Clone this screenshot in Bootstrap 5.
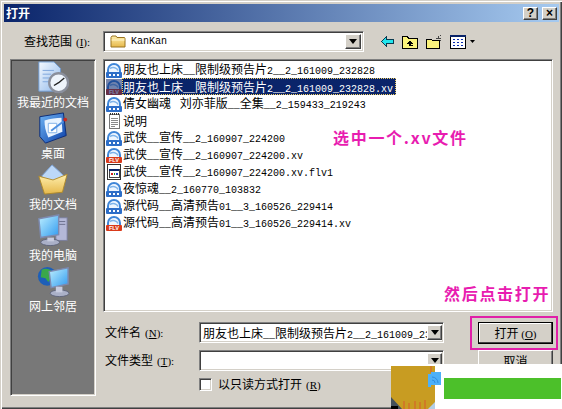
<!DOCTYPE html>
<html>
<head>
  <meta charset="utf-8">
  <title>打开</title>
  <link href="https://cdn.jsdelivr.net/npm/bootstrap@5.3.0/dist/css/bootstrap.min.css" rel="stylesheet">
  <style>
    body { margin: 0; background: #d4d0c8; color: #000; font: 12px/14px "Noto Sans CJK SC", "Liberation Sans", sans-serif; }
    .svg-defs { display: block; width: 0; height: 0; overflow: hidden; }
    .dlg { position: relative; width: 562px; height: 409px; overflow: hidden; background: #d4d0c8; padding: 4px 3px 0 4px;
      box-shadow: inset 1px 1px #d4d0c8, inset 2px 2px #fff, inset -1px -1px #404040, inset -2px -2px #808080; }
    .lat { font: 10px/14px "Liberation Mono", monospace; }
    .key { font: 11px/14px "Liberation Serif", serif; margin-left: 4px; }
    .key u { text-underline-offset: 1px; }

    .dlg-title { height: 18px; padding: 0 2px; background: linear-gradient(90deg, #0a246a, #a6caf0); color: #fff; font-weight: 700; font-size: 12px; }
    .cap-btn { width: 15px; height: 13px; padding: 0; background: #d4d0c8; color: #000; font: 700 12px/11px "Liberation Sans", sans-serif; text-align: center; }
    .raised { border: 1px solid; border-color: #fff #404040 #404040 #fff; box-shadow: inset -1px -1px #808080, inset 1px 1px #d4d0c8; }
    .sunken { border: 1px solid; border-color: #808080 #fff #fff #808080; box-shadow: inset 1px 1px #404040, inset -1px -1px #d4d0c8; }

    .look-row { height: 21px; margin-top: 9px; }
    .look-label { width: 99px; padding-left: 20px; flex: none; }
    .combo { background: #fff; padding: 2px; flex: none; }
    .combo-look { width: 261px; height: 21px; }
    .combo-text { padding-left: 5px; }
    .combo-arrow { width: 16px; margin-left: auto; background: #d4d0c8; }
    .combo-arrow::after { content: ""; border: 4px solid transparent; border-top: 5px solid #000; border-bottom: 0; }
    .tools { margin-left: 17px; gap: 8px; }

    .dlg-main { margin-top: 7px; padding-left: 6px; gap: 7px; }
    .places { width: 86px; height: 337px; background: #787878; padding-top: 1px; flex: none; color: #fff; }
    .place { height: 51px; }
    .place svg { display: block; height: 33px; }
    .place-name { line-height: 15px; margin-top: 0; white-space: nowrap; }

    .right-col { width: 450px; flex: none; }
    .files { height: 253px; background: #fff; padding: 1px 2px 0; border-radius: 0; }
    .files .list-group-item { height: 17px; padding: 0; border: 0; border-radius: 0; background: transparent; color: #000; font-size: 12px; line-height: 17px; white-space: nowrap; }
    .files .list-group-item svg { flex: none; margin-right: 1px; }
    .sel-name { margin-left: -1px; padding: 0 3px 0 1px; height: 17px; outline: 1px dotted #f0d060; outline-offset: -1px; background: #0a246a; color: #fff; }

    .form-area { margin-top: 10px; }
    .field-label { width: 96px; padding-left: 2px; flex: none; }
    .name-box { width: 245px; height: 21px; padding: 2px 1px 2px 2px; }
    .name-box .combo-text { padding-left: 1px; overflow: hidden; white-space: nowrap; width: 226px; line-height: 15px; }
    .name-box .combo-arrow { width: 15px; }
    .type-box { height: 20px; margin-top: 7px; }
    .ro-row { margin-top: 7px; margin-left: 96px; gap: 6px; height: 14px; }
    .ro-check { width: 13px; height: 13px; background: #fff; flex: none; }
    .action-col { width: 75px; margin-left: 34px; flex: none; }
    .win-btn { width: 75px; height: 22px; padding: 0; border-radius: 0; background: #d4d0c8; color: #000; font-size: 12px; line-height: 14px; }
    .win-btn.btn:hover { background: #d4d0c8; color: #000; }
    .win-default { outline: 1px solid #000; outline-offset: -1px; box-shadow: inset -2px -2px #404040, inset 2px 2px #fff; border: 0; }
    .win-cancel { margin-top: 6px; }

    .note { position: absolute; color: #e81cb0; font-family: "Noto Sans CJK SC", sans-serif; font-weight: 700; font-size: 16px; line-height: 18px; white-space: nowrap; }
    .note-pick { left: 333px; top: 128px; letter-spacing: 1.7px; }
    .note-click { left: 444px; top: 284px; letter-spacing: 1.7px; }
    .open-mark { position: absolute; left: 470px; top: 316px; width: 88px; height: 34px; border: 2px solid #e01fa8; }
    .corner-ad { position: absolute; left: 391px; top: 364px; width: 171px; height: 45px; background: #fff; }
    .corner-ad svg { display: block; }
  </style>
</head>
<body>
<svg class="svg-defs" xmlns="http://www.w3.org/2000/svg">
  <defs>
    <linearGradient id="gScreen" x1="0" y1="0" x2="1" y2="1"><stop offset="0" stop-color="#bff0ff"/><stop offset="1" stop-color="#2f9af0"/></linearGradient>
    <linearGradient id="gPage" x1="0" y1="0" x2="1" y2="1"><stop offset="0" stop-color="#f4f9ff"/><stop offset="1" stop-color="#8fb8ea"/></linearGradient>
    <linearGradient id="gFolder" x1="0" y1="0" x2="0" y2="1"><stop offset="0" stop-color="#fff0b0"/><stop offset="1" stop-color="#e6b84a"/></linearGradient>
    <linearGradient id="gTile" x1="0" y1="0" x2="1" y2="1"><stop offset="0" stop-color="#6fb4f4"/><stop offset="1" stop-color="#0b3fa8"/></linearGradient>
    <symbol id="ic-video" viewBox="0 0 16 16">
      <path d="M1 10V8a7 7 0 0 1 14 0v2z" fill="#3f86d8"/>
      <path d="M3 10V8a5 5 0 0 1 10 0v2z" fill="#eef6ff"/>
      <path d="M4 6.5a5 4 0 0 1 8 2" fill="none" stroke="#7fb4ea" stroke-width="1.5"/>
      <rect x="0" y="10" width="16" height="6" rx="1" fill="#2d6ec8"/>
      <rect x="3" y="12" width="2" height="2" fill="#fff"/><rect x="7" y="12" width="2" height="2" fill="#fff"/><rect x="11" y="12" width="2" height="2" fill="#fff"/>
    </symbol>
    <symbol id="ic-flv" viewBox="0 0 16 16">
      <path d="M1 10V8a7 7 0 0 1 14 0v2z" fill="#3f86d8"/>
      <path d="M3 10V8a5 5 0 0 1 10 0v2z" fill="#eef6ff"/>
      <path d="M4 6.5a5 4 0 0 1 8 2" fill="none" stroke="#7fb4ea" stroke-width="1.5"/>
      <rect x="0" y="10" width="16" height="6" rx="1" fill="#d93a1a"/>
      <text x="8" y="15.2" text-anchor="middle" font-family="Liberation Sans" font-weight="700" font-size="5.6" fill="#fff">FLV</text>
    </symbol>
  </defs>
</svg>

<div class="dlg">
  <div class="dlg-title d-flex align-items-center">
    <span>打开</span>
    <span class="ms-auto d-flex gap-1 align-items-center">
      <span class="cap-btn raised">?</span>
      <span class="cap-btn raised">×</span>
    </span>
  </div>

  <div class="look-row d-flex align-items-center">
    <label class="look-label">查找范围<span class="key">(<u>I</u>):</span></label>
    <div class="combo combo-look sunken d-flex align-items-stretch">
      <svg class="ms-1 align-self-center" width="16" height="13" viewBox="0 0 16 13">
        <path d="M1 2.5 2 1h4l1 1.5h7.5l.5 1V12H1z" fill="url(#gFolder)" stroke="#9a7420"/>
        <path d="M1.5 5h13" stroke="#fff6cc"/>
      </svg>
      <span class="combo-text lat align-self-center">KanKan</span>
      <span class="combo-arrow raised d-flex align-items-center justify-content-center"></span>
    </div>
    <div class="tools d-flex align-items-center">
      <svg width="13" height="11" viewBox="0 0 13 11" shape-rendering="crispEdges">
        <path d="M.5 5.5 5.5.5v3h7v4h-7v3z" fill="#22e6ee" stroke="#0b3b50"/>
      </svg>
      <svg width="16" height="14" viewBox="0 0 16 14" shape-rendering="crispEdges">
        <path d="M.5 13.5V1.5h5l1 2h9v10z" fill="#fbf37c" stroke="#000"/>
        <path d="M8 5.5 5 8.500h2v2h4v-1H8.500V8.500H11z" fill="#000"/>
      </svg>
      <svg width="16" height="14" viewBox="0 0 16 14" shape-rendering="crispEdges">
        <path d="M.5 13.500V4.500h5l1 1h7v8z" fill="#fbf37c" stroke="#000"/>
        <path d="M12 4 12 1M10 3 15 3M14 1 15 0M14 5 15 6" stroke="#444"/>
      </svg>
      <span class="d-flex align-items-center gap-1">
        <svg width="16" height="14" viewBox="0 0 16 14" shape-rendering="crispEdges">
          <rect x=".5" y=".5" width="15" height="13" fill="#fff" stroke="#000"/>
          <rect x="0" y="0" width="16" height="2" fill="#0a246a"/>
          <path d="M3 4h2v1H3zM7 4h2v1H7zM11 4h2v1h-2zM3 7h2v1H3zM7 7h2v1H7zM11 7h2v1h-2zM3 10h2v1H3zM7 10h2v1H7zM11 10h2v1h-2z" fill="#0a2cb0"/>
        </svg>
        <svg width="5" height="3" viewBox="0 0 5 3"><path d="M0 0h5L2.500 3z" fill="#000"/></svg>
      </span>
    </div>
  </div>

  <div class="dlg-main d-flex">
    <nav class="places sunken d-flex flex-column">
      <a class="place d-flex flex-column align-items-center text-decoration-none text-white">
        <svg width="32" height="35" viewBox="0 0 32 35">
          <path d="M1 1h16l7 7v24H1z" fill="url(#gPage)" stroke="#6f9ad0"/>
          <path d="M5 10h12M5 14h9M5 18h8M5 22h8" stroke="#7da6dc"/>
          <circle cx="22" cy="23" r="10" fill="#eef4fb" stroke="#8a8f9c" stroke-width="2.500"/>
          <path d="M22 23l6-5M22 23l-5 3" stroke="#222" stroke-width="1.500"/>
        </svg>
        <span class="place-name">我最近的文档</span>
      </a>
      <a class="place d-flex flex-column align-items-center text-decoration-none text-white">
        <svg width="32" height="35" viewBox="0 0 32 35">
          <path d="M2 5 27 1l3 24-22 8-6-7z" fill="url(#gTile)" stroke="#0a2a78"/>
          <path d="M7 9c6-2 13-3 18-3l1 15-15 6C8 20 7 15 7 9z" fill="#e8f3ff"/>
          <path d="M11 12h9v10h-9z" fill="#fff" stroke="#7fb0e8"/>
          <path d="M14 20 27 10" stroke="#4d8fe0" stroke-width="2"/>
          <circle cx="29" cy="8" r="2" fill="#c8281e"/>
        </svg>
        <span class="place-name">桌面</span>
      </a>
      <a class="place d-flex flex-column align-items-center text-decoration-none text-white">
        <svg width="32" height="35" viewBox="0 0 32 35">
          <path d="M15 2 28 14 16 26 4 14z" fill="#bcd8f8" stroke="#7ea6dc"/>
          <path d="M1 14l6 19 19-2 5-19-15 6z" fill="url(#gFolder)" stroke="#b08a2a"/>
        </svg>
        <span class="place-name">我的文档</span>
      </a>
      <a class="place d-flex flex-column align-items-center text-decoration-none text-white">
        <svg width="34" height="35" viewBox="0 0 34 35">
          <rect x="20" y="4" width="12" height="24" fill="#b4b8d8" stroke="#7a7e9c"/>
          <path d="M22 8h8M22 11h8" stroke="#6a6e8c"/>
          <path d="M2 5 23 1v21L4 25z" fill="url(#gScreen)" stroke="#7d8ab0" stroke-width="1.500"/>
          <ellipse cx="14" cy="30" rx="10" ry="3.500" fill="#aab0c8" stroke="#60657c"/>
          <path d="M11 25h7v4h-7z" fill="#c8cce0"/>
        </svg>
        <span class="place-name">我的电脑</span>
      </a>
      <a class="place d-flex flex-column align-items-center text-decoration-none text-white">
        <svg width="34" height="35" viewBox="0 0 34 35">
          <circle cx="11" cy="12" r="10" fill="#1d5fb8"/>
          <path d="M5 5c4-2 8-1 10 1l-2 4 3 3-4 5-3-4-5-1z" fill="#3aa84a"/>
          <path d="M13 7 33 3v17l-18 4z" fill="url(#gScreen)" stroke="#7d8ab0" stroke-width="1.500"/>
          <ellipse cx="24" cy="30" rx="10" ry="3.500" fill="#aab0c8" stroke="#60657c"/>
          <path d="M20 23h7v6h-7z" fill="#c8cce0"/>
        </svg>
        <span class="place-name">网上邻居</span>
      </a>
    </nav>

    <div class="right-col">
      <div class="files list-group sunken">
        <div class="list-group-item d-flex align-items-center"><svg width="16" height="16"><use href="#ic-video"/></svg><span>朋友也上床<span class="lat">__</span>限制级预告片<span class="lat">2__2_161009_232828</span></span></div>
        <div class="list-group-item d-flex align-items-center">
          <svg width="16" height="16"><use href="#ic-flv"/><rect width="16" height="16" fill="#0a246a" opacity=".55"/></svg>
          <span class="sel-name">朋友也上床<span class="lat">__</span>限制级预告片<span class="lat">2__2_161009_232828.xv</span></span>
        </div>
        <div class="list-group-item d-flex align-items-center"><svg width="16" height="16"><use href="#ic-video"/></svg><span>倩女幽魂 <span class="lat">&nbsp;</span>刘亦菲版<span class="lat">__</span>全集<span class="lat">__2_159433_219243</span></span></div>
        <div class="list-group-item d-flex align-items-center">
          <svg width="16" height="16" viewBox="0 0 16 16" shape-rendering="crispEdges">
            <rect x="3.500" y="1.500" width="10" height="14" fill="#fff" stroke="#777"/>
            <path d="M4 1h1M6 1h1M8 1h1M10 1h1M12 1h1" stroke="#333" stroke-width="2"/>
            <path d="M5 5h7M5 7h7M5 9h7M5 11h7M5 13h4" stroke="#8a8a8a"/>
          </svg>
          <span>说明</span>
        </div>
        <div class="list-group-item d-flex align-items-center"><svg width="16" height="16"><use href="#ic-video"/></svg><span>武侠<span class="lat">__</span>宣传<span class="lat">__2_160907_224200</span></span></div>
        <div class="list-group-item d-flex align-items-center"><svg width="16" height="16"><use href="#ic-flv"/></svg><span>武侠<span class="lat">__</span>宣传<span class="lat">__2_160907_224200.xv</span></span></div>
        <div class="list-group-item d-flex align-items-center">
          <svg width="16" height="16" viewBox="0 0 16 16" shape-rendering="crispEdges">
            <rect x="1.500" y=".5" width="13" height="15" fill="#fff" stroke="#333"/>
            <rect x="3" y="5" width="10" height="8" fill="#fff" stroke="#444"/>
            <rect x="3" y="5" width="10" height="2" fill="#0a246a"/>
            <path d="M5 9h2v2H5z" fill="#d32020"/><path d="M8 9h1v2H8z" fill="#1a8a2a"/><path d="M10 9h2v2h-2z" fill="#2040c8"/>
          </svg>
          <span>武侠<span class="lat">__</span>宣传<span class="lat">__2_160907_224200.xv.flv1</span></span>
        </div>
        <div class="list-group-item d-flex align-items-center"><svg width="16" height="16"><use href="#ic-video"/></svg><span>夜惊魂<span class="lat">__2_160770_103832</span></span></div>
        <div class="list-group-item d-flex align-items-center"><svg width="16" height="16"><use href="#ic-video"/></svg><span>源代码<span class="lat">__</span>高清预告<span class="lat">01__3_160526_229414</span></span></div>
        <div class="list-group-item d-flex align-items-center"><svg width="16" height="16"><use href="#ic-flv"/></svg><span>源代码<span class="lat">__</span>高清预告<span class="lat">01__3_160526_229414.xv</span></span></div>
      </div>

      <div class="form-area d-flex">
        <div>
          <div class="d-flex align-items-center">
            <label class="field-label">文件名<span class="key">(<u>N</u>):</span></label>
            <div class="combo name-box sunken d-flex align-items-stretch">
              <span class="combo-text">朋友也上床<span class="lat">__</span>限制级预告片<span class="lat">2__2_161009_232828</span></span>
              <span class="combo-arrow raised d-flex align-items-center justify-content-center"></span>
            </div>
          </div>
          <div class="d-flex align-items-center type-box">
            <label class="field-label">文件类型<span class="key">(<u>T</u>):</span></label>
            <div class="combo name-box sunken d-flex align-items-stretch">
              <span class="combo-text"></span>
              <span class="combo-arrow raised d-flex align-items-center justify-content-center"></span>
            </div>
          </div>
          <div class="ro-row d-flex align-items-center">
            <span class="ro-check sunken"></span>
            <span>以只读方式打开<span class="key">(<u>R</u>)</span></span>
          </div>
        </div>
        <div class="action-col">
          <button class="btn win-btn win-default" type="button">打开 <span class="key ms-0">(<u>O</u>)</span></button>
          <button class="btn win-btn win-cancel raised" type="button">取消</button>
        </div>
      </div>
    </div>
  </div>

  <div class="note note-pick">选中一个.xv文件</div>
  <div class="note note-click">然后点击打开</div>
  <div class="open-mark"></div>
  <div class="corner-ad">
    <svg width="171" height="45" viewBox="0 0 171 45">
      <rect x="0" y="2" width="44" height="43" fill="#c89c22"/>
      <path d="M0 33 11 45H0z" fill="#44505a"/>
      <path d="M0 42h7v3H0z" fill="#000"/>
      <path d="M37 45 44 38v7z" fill="#b4cfe8"/>
      <path d="M13 37v8M18 39v6M24 37v8M29 38v7M34 36v9" stroke="#d85a2a"/>
      <path d="M40 2v7" stroke="#d85a2a"/>
      <path d="M37 10h3V8h10v13H40v2h-3z" fill="#4cb0f8"/>
      <path d="M41 13a6 6 0 0 1 6 6M41 16a3 3 0 0 1 3 3" fill="none" stroke="#2f8ce0"/>
      <rect x="53" y="14" width="117" height="21" fill="#4cc02a"/>
    </svg>
  </div>
</div>
<script src="https://cdn.jsdelivr.net/npm/bootstrap@5.3.0/dist/js/bootstrap.bundle.min.js"></script>
</body>
</html>
